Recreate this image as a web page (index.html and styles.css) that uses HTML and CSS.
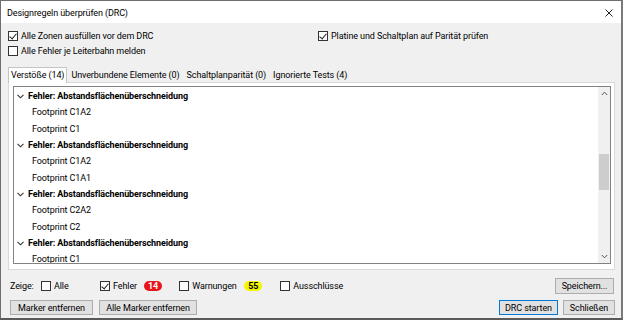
FILE: index.html
```html
<!DOCTYPE html>
<html lang="de">
<head>
  <meta charset="UTF-8" />
  <title>Designregeln überprüfen (DRC)</title>
  <link rel="stylesheet" href="styles.css">
</head>
<body>
  <div class="window">
    <div class="titlebar">
      <span class="title">Designregeln überprüfen (DRC)</span>
      <svg class="close" width="8" height="8" viewBox="0 0 8 8"><path d="M0.5 0.5 L7.5 7.5 M7.5 0.5 L0.5 7.5" stroke="#222" stroke-width="1" fill="none"/></svg>
    </div>

    <div class="content">
      <!-- Optionen -->
      <div class="options">
        <label class="check"><span class="box on"></span>Alle Zonen ausfüllen vor dem DRC</label>
        <label class="check"><span class="box on"></span>Platine und Schaltplan auf Parität prüfen</label>
        <label class="check"><span class="box"></span>Alle Fehler je Leiterbahn melden</label>
      </div>

      <!-- Tabs -->
      <div class="tabs">
        <span class="tab active">Verstöße (14)</span>
        <span class="tab">Unverbundene Elemente (0)</span>
        <span class="tab">Schaltplanparität (0)</span>
        <span class="tab">Ignorierte Tests (4)</span>
      </div>

      <div class="panel">
        <div class="list">
          <div class="tree">
            <div class="row head"><svg class="chev" width="7" height="5" viewBox="0 0 7 5"><path d="M0.5 0.8 L3.5 3.8 L6.5 0.8" stroke="#333" stroke-width="1.1" fill="none"/></svg>Fehler: Abstandsflächenüberschneidung</div>
            <div class="row item">Footprint C1A2</div>
            <div class="row item">Footprint C1</div>
            <div class="row head"><svg class="chev" width="7" height="5" viewBox="0 0 7 5"><path d="M0.5 0.8 L3.5 3.8 L6.5 0.8" stroke="#333" stroke-width="1.1" fill="none"/></svg>Fehler: Abstandsflächenüberschneidung</div>
            <div class="row item">Footprint C1A2</div>
            <div class="row item">Footprint C1A1</div>
            <div class="row head"><svg class="chev" width="7" height="5" viewBox="0 0 7 5"><path d="M0.5 0.8 L3.5 3.8 L6.5 0.8" stroke="#333" stroke-width="1.1" fill="none"/></svg>Fehler: Abstandsflächenüberschneidung</div>
            <div class="row item">Footprint C2A2</div>
            <div class="row item">Footprint C2</div>
            <div class="row head"><svg class="chev" width="7" height="5" viewBox="0 0 7 5"><path d="M0.5 0.8 L3.5 3.8 L6.5 0.8" stroke="#333" stroke-width="1.1" fill="none"/></svg>Fehler: Abstandsflächenüberschneidung</div>
            <div class="row item">Footprint C1</div>
          </div>
          <div class="scrollbar">
            <svg class="arrow" width="7" height="5" viewBox="0 0 7 5"><path d="M0.8 4 L3.5 1.2 L6.2 4" stroke="#555" stroke-width="1" fill="none"/></svg>
            <div class="track"><div class="thumb"></div></div>
            <svg class="arrow" width="7" height="5" viewBox="0 0 7 5"><path d="M0.8 1 L3.5 3.8 L6.2 1" stroke="#555" stroke-width="1" fill="none"/></svg>
          </div>
        </div>
      </div>

      <!-- Filter -->
      <div class="filter">
        <span class="label">Zeige:</span>
        <label class="check f-alle"><span class="box"></span>Alle</label>
        <label class="check f-fehler"><span class="box on"></span>Fehler</label>
        <span class="badge red">14</span>
        <label class="check f-warn"><span class="box"></span>Warnungen</label>
        <span class="badge yellow">55</span>
        <label class="check f-aus"><span class="box"></span>Ausschlüsse</label>
        <button class="btn save">Speichern...</button>
      </div>

      <!-- Buttons -->
      <div class="actions">
        <button class="btn b-marker">Marker entfernen</button>
        <button class="btn b-alle">Alle Marker entfernen</button>
        <span class="spacer"></span>
        <button class="btn primary">DRC starten</button>
        <button class="btn b-close">Schließen</button>
      </div>
    </div>
  </div>
</body>
</html>
```

FILE: styles.css
```css
* {
  box-sizing: border-box;
}

body {
  margin: 0;
  padding: 0;
  font-family: Roboto, 'Liberation Sans', sans-serif;
  font-size: 9px;
  letter-spacing: -0.1px;
  color: #000;
  background: #f0f0f0;
}

.window {
  width: 623px;
  height: 320px;
  background: #f0f0f0;
  border-top: 1px solid #6e6e6e;
  border-left: 1px solid #6e6e6e;
  border-right: 2px solid #7a7a7a;
  border-bottom: 2px solid #5a5a5a;
  display: flex;
  flex-direction: column;
}

.titlebar {
  height: 22px;
  background: #fff;
  display: flex;
  align-items: center;
  padding: 0 8px 0 6px;
  flex-shrink: 0;
}

.title {
  flex: 1;
  padding-top: 2px;
}

.close {
  margin-top: 2px;
}

.content {
  flex: 1;
  display: flex;
  flex-direction: column;
  padding: 8px 6px 0 7px;
}

/* Checkboxen */
.options {
  display: grid;
  grid-template-columns: 310px auto;
  row-gap: 5px;
}

.check {
  display: flex;
  align-items: center;
  height: 10px;
  white-space: nowrap;
}

.box {
  width: 10px;
  height: 10px;
  border: 1px solid #333;
  background: #fff;
  margin-right: 3px;
  position: relative;
  flex-shrink: 0;
}

.box.on::after {
  content: "";
  position: absolute;
  left: 2px;
  top: 0px;
  width: 3px;
  height: 6px;
  border-right: 1px solid #222;
  border-bottom: 1px solid #222;
  transform: rotate(40deg);
}

/* Tabs */
.tabs {
  display: flex;
  margin-top: 11px;
  height: 15px;
  align-items: flex-end;
}

.tab {
  padding: 0 3px 0 4px;
  height: 14px;
  line-height: 14px;
  white-space: nowrap;
}

.tab.active {
  height: 16px;
  line-height: 15px;
  background: #fff;
  border: 1px solid #c4c4c4;
  border-bottom: none;
  padding: 0 2px 0 2px;
  position: relative;
  z-index: 2;
  margin-bottom: -1px;
}

.panel {
  border: 1px solid #d9d9d9;
  background: #fff;
  height: 188px;
  padding: 3px 3px 5px 4px;
}

.list {
  border: 1px solid #828282;
  height: 100%;
  display: flex;
  background: #fff;
}

.tree {
  flex: 1;
  padding-top: 1px;
  overflow: hidden;
}

.row {
  height: 16.33px;
  display: flex;
  align-items: center;
  white-space: nowrap;
}

.row.head {
  font-weight: bold;
  padding-left: 3px;
}

.chev {
  margin-right: 4px;
}

.row.item {
  padding-left: 18px;
}

.scrollbar {
  width: 12px;
  background: #f0f0f0;
  display: flex;
  flex-direction: column;
  align-items: center;
}

.arrow {
  margin: 4px 0;
}

.track {
  flex: 1;
  width: 100%;
}

.thumb {
  margin-top: 54px;
  height: 36px;
  background: #cdcdcd;
  margin-left: 1px;
  margin-right: 1px;
}

/* Filter-Zeile */
.filter {
  display: flex;
  align-items: center;
  height: 18px;
  margin-top: 7px;
  padding-left: 2px;
}

.label {
  width: 31px;
}

.f-alle {
  width: 59px;
}

.f-fehler {
  width: 44px;
}

.f-warn {
  width: 65px;
  margin-left: 17px;
}

.f-aus {
  margin-left: 18px;
}

.badge {
  font-weight: bold;
  height: 10px;
  line-height: 10px;
  padding: 0 4px;
  border-radius: 6px;
}

.badge.red {
  background: #e8141c;
  color: #fff;
}

.badge.yellow {
  background: #f5f500;
  color: #000;
}

.btn {
  font-family: inherit;
  font-size: 9px;
  letter-spacing: inherit;
  background: #e1e1e1;
  border: 1px solid #adadad;
  height: 16px;
  padding: 0;
  color: #000;
  white-space: nowrap;
}

.save {
  margin-left: auto;
  margin-right: 1px;
  width: 59px;
}

.actions {
  display: flex;
  margin-top: 5px;
  gap: 6px;
  padding-left: 2px;
}

.actions .btn {
  height: 15px;
}

.b-marker {
  width: 83px;
}

.b-alle {
  width: 98px;
}

.spacer {
  flex: 1;
}

.btn.primary {
  border-color: #0078d7;
  width: 59px;
  margin-right: -1px;
}

.b-close {
  width: 52px;
}
```
